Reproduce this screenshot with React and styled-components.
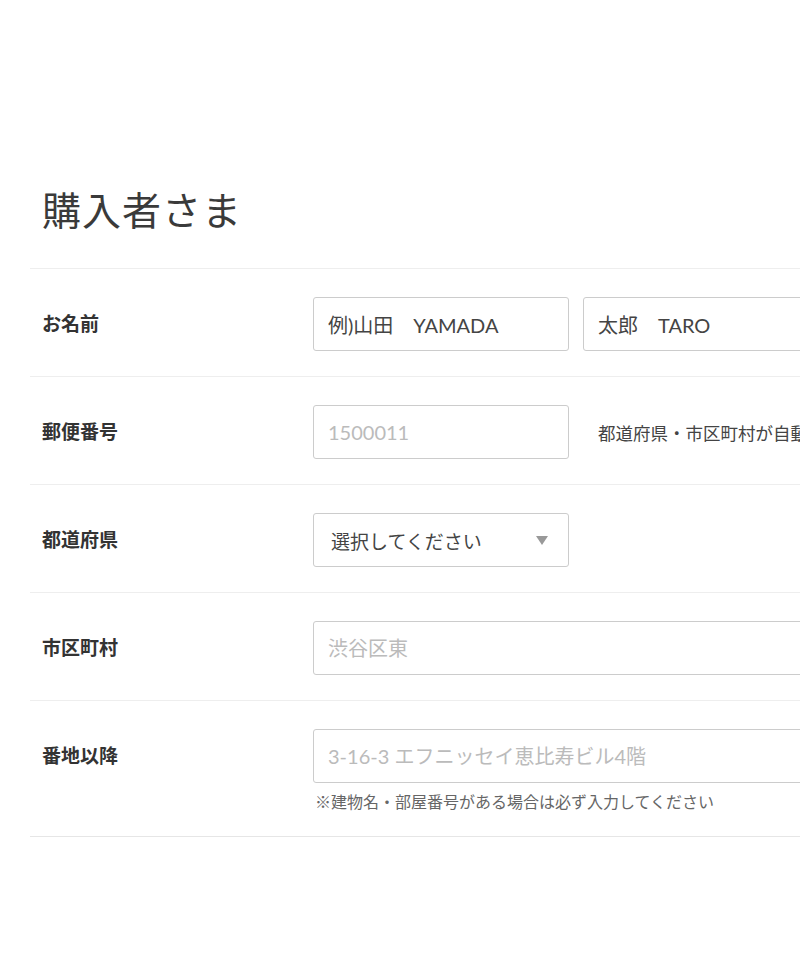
import React from 'react'
import styled, { createGlobalStyle } from 'styled-components'

const Global = createGlobalStyle`
  html, body {
    margin: 0;
    padding: 0;
    background: #fff;
    overflow: hidden;
  }
  body {
    font-family: Lato, "Noto Sans CJK JP", sans-serif;
    color: #333;
  }
`

const Page = styled.div`
  width: 1100px;
  padding: 183px 0 0 30px;
`

const Title = styled.h2`
  margin: 0 0 31px 12px;
  font-size: 39px;
  line-height: 54px;
  font-weight: 400;
  color: #3a3a3a;
  letter-spacing: 1px;
`

const Row = styled.div`
  display: grid;
  grid-template-columns: 283px 1fr;
  align-items: start;
  border-top: 1px solid #eee;
  padding: 28px 0 25px;
  &:last-child {
    border-bottom: 1px solid #e6e6e6;
    padding-bottom: 23px;
  }
`

const Label = styled.div`
  padding-left: 12px;
  font-size: 19px;
  font-weight: 700;
  line-height: 54px;
  color: #333;
`

const Fields = styled.div`
  display: flex;
  align-items: center;
  gap: ${({ gap }) => gap || 14}px;
`

const Input = styled.input`
  box-sizing: border-box;
  width: ${({ wide }) => (wide ? '540px' : '256px')};
  height: 54px;
  border: 1px solid #ccc;
  border-radius: 3px;
  padding: 0 14px;
  font-family: Lato, "Noto Sans CJK JP", sans-serif;
  font-size: 20px;
  color: #444;
  background: #fff;
  outline: none;
  &::placeholder {
    color: #bbb;
  }
`

const Select = styled.div`
  box-sizing: border-box;
  width: 256px;
  height: 54px;
  border: 1px solid #ccc;
  border-radius: 3px;
  padding: 0 20px 0 17px;
  display: flex;
  align-items: center;
  justify-content: space-between;
  font-size: 19px;
  color: #444;
`

const Arrow = styled.span`
  width: 0;
  height: 0;
  border-left: 6px solid transparent;
  border-right: 6px solid transparent;
  border-top: 9px solid #999;
`

const Help = styled.div`
  font-size: 17.5px;
  color: #444;
  white-space: nowrap;
`

const Note = styled.div`
  margin-top: 8px;
  padding-left: 2px;
  font-size: 16px;
  line-height: 22px;
  color: #666;
`

export default function App() {
  return (
    <>
      <Global />
      <Page>
        <Title>購入者さま</Title>
        <Row>
          <Label>お名前</Label>
          <Fields>
            <Input defaultValue="例)山田　YAMADA" />
            <Input defaultValue="太郎　TARO" />
          </Fields>
        </Row>
        <Row>
          <Label>郵便番号</Label>
          <Fields gap={29}>
            <Input placeholder="1500011" />
            <Help>都道府県・市区町村が自動入力されます</Help>
          </Fields>
        </Row>
        <Row>
          <Label>都道府県</Label>
          <Fields>
            <Select>
              <span>選択してください</span>
              <Arrow />
            </Select>
          </Fields>
        </Row>
        <Row>
          <Label>市区町村</Label>
          <Fields>
            <Input wide placeholder="渋谷区東" />
          </Fields>
        </Row>
        <Row>
          <Label>番地以降</Label>
          <div>
            <Input wide placeholder="3-16-3 エフニッセイ恵比寿ビル4階" />
            <Note>※建物名・部屋番号がある場合は必ず入力してください</Note>
          </div>
        </Row>
      </Page>
    </>
  )
}
